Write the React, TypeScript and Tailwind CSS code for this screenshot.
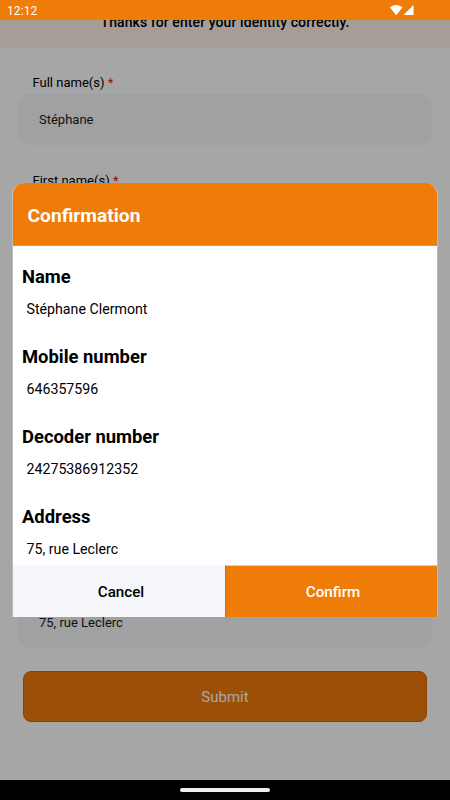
type FieldProps = {
  label: string;
  value?: string;
};

const details = [
  { label: "Name", value: "Stéphane Clermont" },
  { label: "Mobile number", value: "646357596" },
  { label: "Decoder number", value: "24275386912352" },
  { label: "Address", value: "75, rue Leclerc" },
];

function StatusBar() {
  return (
    <header className="flex h-5 shrink-0 items-center justify-between bg-[#ef7b08] pr-[36px] pl-[7px] text-white">
      <span className="pt-px text-[12px] leading-5 tracking-[0.1px]">12:12</span>
      <span className="flex items-center">
        <svg width="14" height="12" viewBox="0 0 14 12" fill="currentColor" aria-hidden="true">
          <path d="M7.2 11.2 1 3.6C2.6 1.9 4.8 1 7.2 1s4.6.9 6.2 2.6z" />
        </svg>
        <svg width="11" height="12" viewBox="0 0 11 12" fill="currentColor" aria-hidden="true">
          <path d="M0.5 11 10.5 1V11z" />
        </svg>
      </span>
    </header>
  );
}

function Field({ label, value }: FieldProps) {
  return (
    <div>
      <div className="pl-[14.5px] text-[13px] leading-5">
        {label} <span className="text-[#f0101c]">*</span>
      </div>
      <div className="mt-px flex h-[51px] items-center rounded-xl bg-[#f5f7f9] pl-[21px] text-[13px] text-[#1a1a1a]">
        {value}
      </div>
    </div>
  );
}

function IdentityForm() {
  return (
    <main className="flex h-full flex-col bg-white text-black">
      <div className="h-7 shrink-0 bg-[#fff1e6] text-center">
        <p className="-mt-[8px] text-[14px] leading-5 font-medium tracking-[0.08px]">
          Thanks for enter your identity correctly.
        </p>
      </div>
      <div className="flex h-[604px] shrink-0 flex-col px-[18px] pt-[25px]">
        <div className="flex flex-col gap-[26px]">
          <Field label="Full name(s)" value="Stéphane" />
          <Field label="First name(s)" />
        </div>
        <div className="mt-auto mb-1">
          <Field label="Address" value="75, rue Leclerc" />
        </div>
      </div>
      <button
        type="button"
        className="mx-[23px] mt-[19px] h-[51px] shrink-0 rounded-lg border border-[#df6000] bg-[#f07a0a] pt-[2px] text-[15px] text-white"
      >
        Submit
      </button>
    </main>
  );
}

function ConfirmationDialog() {
  return (
    <section
      role="dialog"
      aria-label="Confirmation"
      className="flex h-[434px] w-[426px] flex-col overflow-hidden rounded-t-xl border-x border-white/25 bg-white bg-clip-padding text-black"
    >
      <h1 className="flex h-[63px] shrink-0 items-center border-b border-[#f58f3a] bg-[#ef7b08] pt-[4px] pl-[14.5px] text-[19.2px] font-bold text-white">
        Confirmation
      </h1>
      <dl className="flex min-h-0 flex-1 flex-col overflow-hidden pt-[19px] pl-[9px]">
        {details.map((item) => (
          <div key={item.label} className="h-20 shrink-0">
            <dt className="text-[18.4px] leading-6 font-bold">{item.label}</dt>
            <dd className="mt-[10px] pl-[4.5px] text-[14.2px] leading-5">{item.value}</dd>
          </div>
        ))}
      </dl>
      <div className="grid h-[52px] shrink-0 grid-cols-2 text-[15.2px] font-medium">
        <button type="button" className="bg-[#f5f7fa] pt-[2px] pl-[4px]">
          Cancel
        </button>
        <button
          type="button"
          className="border-t border-l border-t-[#f9c6a0] border-l-[#f26500] bg-[#ef7b08] pt-px pl-[3px] text-white"
        >
          Confirm
        </button>
      </div>
    </section>
  );
}

export default function App() {
  return (
    <div className="flex h-[800px] w-[450px] flex-col overflow-hidden font-['Roboto',sans-serif]">
      <StatusBar />
      <div className="relative h-[760px] shrink-0 overflow-hidden">
        <IdentityForm />
        <div className="absolute inset-0 flex items-start justify-center bg-black/35 pt-[163px]">
          <ConfirmationDialog />
        </div>
      </div>
      <footer className="flex h-5 shrink-0 items-center justify-center bg-black">
        <span className="h-1 w-[90px] rounded-full bg-[#eeeeee]" />
      </footer>
    </div>
  );
}
